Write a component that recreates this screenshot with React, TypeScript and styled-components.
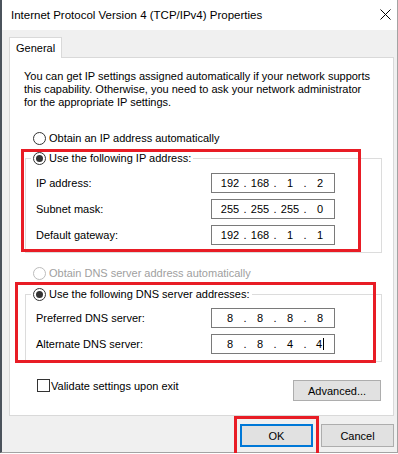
import { Fragment } from 'react';
import styled, { createGlobalStyle } from 'styled-components';

const GlobalStyle = createGlobalStyle`
  html, body {
    margin: 0;
    padding: 0;
    background: #fff;
    overflow: hidden;
  }
  body {
    font-family: "Liberation Sans", Arial, sans-serif;
    font-size: 11px;
    color: #000;
  }
  * { box-sizing: border-box; }
`;

const Window = styled.div`
  position: relative;
  width: 398px;
  height: 453px;
  display: flex;
  flex-direction: column;
  background: #f0f0f0;
  border-left: 2px solid #4b535c;
  border-right: 1px solid #a3a3a3;
  border-bottom: 1px solid #a3a3a3;
`;

const TitleBar = styled.div`
  height: 30px;
  flex: none;
  display: flex;
  align-items: center;
  justify-content: space-between;
  padding: 0 6px 0 9px;
  background: #fff;
  font-size: 11.5px;
`;

const CloseIcon = () => (
  <svg width="11" height="11" viewBox="0 0 11 11" style={{ marginTop: -1 }}>
    <path d="M0.5 0.5 L10.5 10.5 M10.5 0.5 L0.5 10.5" stroke="#000" strokeWidth="1" fill="none" />
  </svg>
);

const Body = styled.div`
  flex: 1;
  display: flex;
  flex-direction: column;
  padding: 7px 0 0 7px;
`;

const TabStrip = styled.div`
  display: flex;
  height: 20px;
`;

const Tab = styled.div`
  position: relative;
  z-index: 1;
  width: 53px;
  height: 21px;
  padding: 4px 0 0 6px;
  background: #fff;
  border: 1px solid #d9d9d9;
  border-bottom: none;
`;

const Panel = styled.div`
  width: 385px;
  height: 359px;
  display: flex;
  flex-direction: column;
  background: #fff;
  border: 1px solid #d9d9d9;
`;

const Intro = styled.p`
  margin: 12px 0 0 14px;
  line-height: 13px;
  white-space: nowrap;
`;

const RadioRow = styled.label<{ $top: number; $disabled?: boolean }>`
  display: flex;
  align-items: center;
  gap: 3px;
  height: 16px;
  margin: ${p => p.$top}px 0 0 23px;
  color: ${p => (p.$disabled ? '#a0a0a0' : '#000')};
  white-space: nowrap;
`;

const Circle = styled.span<{ $checked?: boolean; $disabled?: boolean }>`
  width: 13px;
  height: 13px;
  flex: none;
  display: flex;
  align-items: center;
  justify-content: center;
  border-radius: 50%;
  border: 1px solid ${p => (p.$disabled ? '#bcbcbc' : '#333')};
  background: #fff;

  &::after {
    content: '';
    display: ${p => (p.$checked ? 'block' : 'none')};
    width: 7px;
    height: 7px;
    border-radius: 50%;
    background: #333;
  }
`;

/* red annotation frame drawn over the wrapped control */
const Highlight = styled.div<{ $l: number; $t: number; $r: number; $b: number; $open?: boolean }>`
  position: relative;

  &::after {
    content: '';
    position: absolute;
    left: ${p => p.$l}px;
    top: ${p => p.$t}px;
    right: ${p => p.$r}px;
    bottom: ${p => p.$b}px;
    border: 3px solid #e81c25;
    border-bottom-width: ${p => (p.$open ? 0 : 3)}px;
    pointer-events: none;
  }
`;

const GroupSlot = styled(Highlight)<{ $top: number }>`
  align-self: flex-start;
  margin: ${p => p.$top}px 0 0 15px;
`;

const Group = styled.fieldset<{ $padTop: number }>`
  margin: 0;
  width: 357px;
  min-width: 0;
  padding: ${p => p.$padTop}px 46px 7px 5px;
  border: 1px solid #dcdcdc;
`;

const Legend = styled.legend`
  padding: 0 2px;
  height: 16px;
  display: flex;
  align-items: center;
  gap: 3px;
  white-space: nowrap;
`;

const FieldGrid = styled.div`
  display: grid;
  grid-template-columns: 1fr 124px;
  grid-auto-rows: 20px;
  row-gap: 6px;
  align-items: center;
`;

const FieldLabel = styled.span`
  padding-left: 5px;
`;

const IpBox = styled.div`
  height: 20px;
  display: flex;
  align-items: center;
  padding-left: 7px;
  background: #fff;
  border: 1px solid #7a7a7a;
`;

const Octet = styled.span`
  width: 22px;
  text-align: center;
  white-space: nowrap;
`;

const Dot = styled.span`
  width: 8px;
  text-align: center;
`;

const Caret = styled.span`
  display: inline-block;
  width: 1px;
  height: 12px;
  margin-left: 1px;
  vertical-align: -2px;
  background: #000;
`;

const Footer = styled.div`
  display: flex;
  justify-content: space-between;
  align-items: flex-start;
  margin-top: 17px;
  padding: 0 12px 0 27px;
`;

const CheckRow = styled.label`
  display: flex;
  align-items: center;
  gap: 1px;
  height: 13px;
`;

const CheckBox = styled.span`
  width: 13px;
  height: 13px;
  border: 1px solid #333;
  background: #fff;
`;

const Button = styled.button<{ $w: number; $h: number; $focused?: boolean }>`
  width: ${p => p.$w}px;
  height: ${p => p.$h}px;
  padding: 0;
  font: inherit;
  color: #000;
  background: #e1e1e1;
  border: ${p => (p.$focused ? '2px solid #0078d7' : '1px solid #adadad')};
`;

const AdvancedButton = styled(Button)`
  margin-top: 1px;
`;

const ButtonBar = styled.div`
  display: flex;
  justify-content: flex-end;
  gap: 8px;
  margin: 8px 3px 0 0;
`;

const IpField = ({ value, caret }: { value: string; caret?: boolean }) => {
  const parts = value.split('.');
  return (
    <IpBox>
      {parts.map((p, i) => (
        <Fragment key={i}>
          <Octet>
            {p}
            {caret && i === parts.length - 1 && <Caret />}
          </Octet>
          {i < parts.length - 1 && <Dot>.</Dot>}
        </Fragment>
      ))}
    </IpBox>
  );
};

const App = () => {
  return (
    <>
      <GlobalStyle />
      <Window>
        <TitleBar>
          <span>Internet Protocol Version 4 (TCP/IPv4) Properties</span>
          <CloseIcon />
        </TitleBar>
        <Body>
          <TabStrip>
            <Tab>General</Tab>
          </TabStrip>
          <Panel>
            <Intro>
              You can get IP settings assigned automatically if your network supports
              <br />
              this capability. Otherwise, you need to ask your network administrator
              <br />
              for the appropriate IP settings.
            </Intro>

            <RadioRow $top={21}>
              <Circle />
              Obtain an IP address automatically
            </RadioRow>

            <GroupSlot $top={4} $l={-4} $t={-1} $r={21} $b={1}>
              <Group $padTop={7}>
                <Legend>
                  <Circle $checked />
                  Use the following IP address:
                </Legend>
                <FieldGrid>
                  <FieldLabel>IP address:</FieldLabel>
                  <IpField value="192.168.1.2" />
                  <FieldLabel>Subnet mask:</FieldLabel>
                  <IpField value="255.255.255.0" />
                  <FieldLabel>Default gateway:</FieldLabel>
                  <IpField value="192.168.1.1" />
                </FieldGrid>
              </Group>
            </GroupSlot>

            <RadioRow $top={12} $disabled>
              <Circle $disabled />
              Obtain DNS server address automatically
            </RadioRow>

            <GroupSlot $top={5} $l={-10} $t={-4} $r={6} $b={-1}>
              <Group $padTop={6}>
                <Legend>
                  <Circle $checked />
                  Use the following DNS server addresses:
                </Legend>
                <FieldGrid>
                  <FieldLabel>Preferred DNS server:</FieldLabel>
                  <IpField value="8.8.8.8" />
                  <FieldLabel>Alternate DNS server:</FieldLabel>
                  <IpField value="8.8.4.4" caret />
                </FieldGrid>
              </Group>
            </GroupSlot>

            <Footer>
              <CheckRow>
                <CheckBox />
                Validate settings upon exit
              </CheckRow>
              <AdvancedButton $w={88} $h={21}>
                Advanced...
              </AdvancedButton>
            </Footer>
          </Panel>

          <ButtonBar>
            <Highlight $l={-6} $t={-8} $r={-6} $b={-7} $open>
              <Button $w={73} $h={23} $focused>
                OK
              </Button>
            </Highlight>
            <Button $w={73} $h={23}>
              Cancel
            </Button>
          </ButtonBar>
        </Body>
      </Window>
    </>
  );
};

export default App;
